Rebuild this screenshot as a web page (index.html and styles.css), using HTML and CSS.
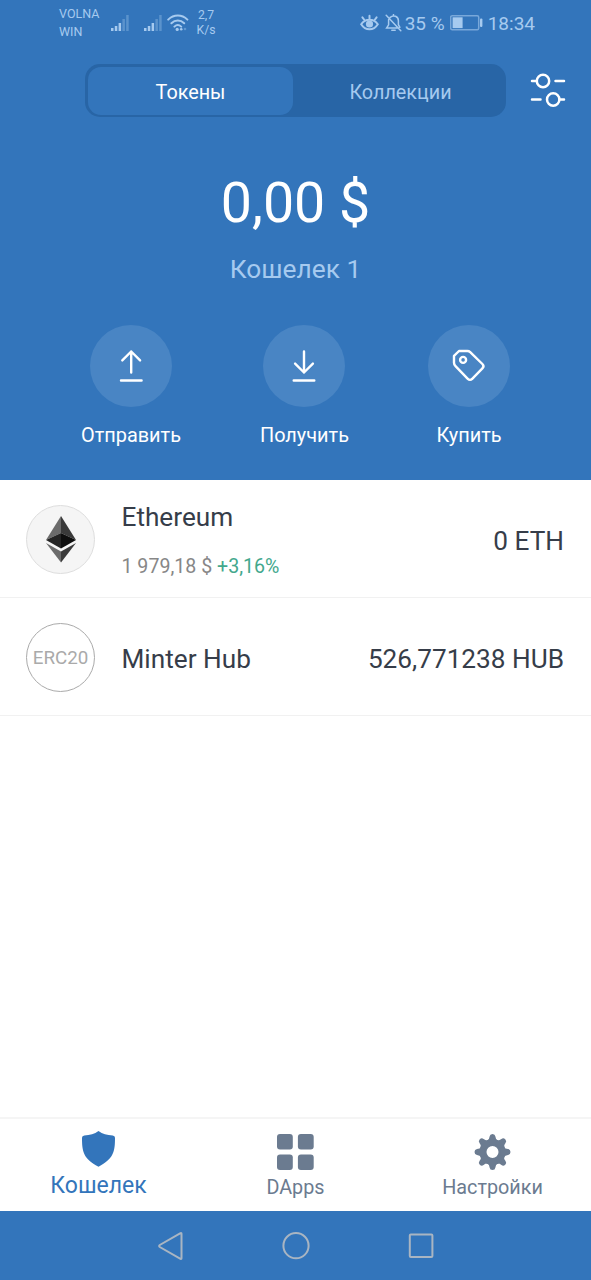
FILE: index.html
```html
<!DOCTYPE html>
<html lang="ru">
<head>
    <meta charset="UTF-8">
    <meta name="viewport" content="width=device-width, initial-scale=1.0">
    <title>Кошелек</title>
    <link rel="stylesheet" href="styles.css">
</head>
<body>

    <div class="top">
        <!-- Phone status bar -->
        <div class="status-bar">
            <div class="carrier">VOLNA<br>WIN</div>
            <svg class="signal signal-one" width="18" height="18" viewBox="0 0 18 18">
                <path d="M0 14h2.5v3H0zM3.8 12h2.5v5H3.8zM7.6 9h2.5v8H7.6z"/>
                <path opacity=".35" d="M11.4 5h2.5v12h-2.5zM15.2 1h2.5v16h-2.5z"/>
            </svg>
            <svg class="signal signal-two" width="18" height="18" viewBox="0 0 18 18">
                <path d="M0 14h2.5v3H0zM3.8 12h2.5v5H3.8zM7.6 9h2.5v8H7.6z"/>
                <path opacity=".35" d="M11.4 5h2.5v12h-2.5zM15.2 1h2.5v16h-2.5z"/>
            </svg>
            <svg class="wifi" width="22" height="18" viewBox="0 0 22 18">
                <path class="line" d="M1.2 5.6C6.8.2 14.8.2 20.4 5.6M4.4 9.2c3.7-3.5 9.1-3.5 12.8 0M7.4 12.6c2-1.9 4.8-1.9 6.8 0"/>
                <circle cx="10.2" cy="15.4" r="1.6"/>
                <circle cx="14.2" cy="15.2" r="1.3"/>
                <circle opacity=".4" cx="18" cy="15" r="1.3"/>
            </svg>
            <div class="speed">2,7<br>K/s</div>
            <div class="status-right">
                <svg width="19" height="18" viewBox="0 0 19 18">
                    <path class="line" d="M1.2 10.2c4.2-6 12.4-6 16.6 0-4.2 6.8-12.4 6.8-16.6 0zM9.5 5V1.8M4.4 6L2.4 3.4M14.6 6l2-2.6"/>
                    <circle cx="9.5" cy="10" r="3.6"/>
                </svg>
                <svg class="bell" width="17" height="18" viewBox="0 0 17 18">
                    <path class="thin" d="M3.6 5.5v5.3L1.6 14h12M5.2 3.4c3.2-3 8.2-1 8.2 3.3v4l1.5 2.6M6.8 16.3h3.4M8.5 2V.5M1.2 1.2l14.6 15.6"/>
                </svg>
                <span class="percent">35 %</span>
                <svg class="battery" width="33" height="18" viewBox="0 0 33 18">
                    <rect class="thin" x=".7" y="1.7" width="28" height="14" rx="1.5" opacity=".6"/>
                    <rect x="2.6" y="3.3" width="10" height="10.8"/>
                    <rect x="30" y="4.5" width="2.4" height="8.5" rx="1"/>
                </svg>
                <span class="clock">18:34</span>
            </div>
        </div>

        <!-- Tabs -->
        <div class="tab-row">
            <div class="tabs">
                <div class="tab active">Токены</div>
                <div class="tab">Коллекции</div>
            </div>
            <svg class="filter-icon" width="36" height="36" viewBox="0 0 36 36">
                <path d="M2 8h4M25.5 8H34M2 26.5h8.5M29.5 26.5H34"/>
                <circle cx="13" cy="8" r="6.2"/>
                <circle cx="23.2" cy="26.5" r="6.2"/>
            </svg>
        </div>

        <div class="balance">0,00 $</div>
        <div class="wallet-name">Кошелек 1</div>

        <div class="actions">
            <div class="action">
                <div class="action-circle">
                    <svg width="36" height="36" viewBox="0 0 36 36">
                        <path d="M18.2 24.5v-21M9.3 12.4l8.9-8.9 8.9 8.9M8 32.5h20.6"/>
                    </svg>
                </div>
                <div class="action-label">Отправить</div>
            </div>
            <div class="action">
                <div class="action-circle">
                    <svg width="36" height="36" viewBox="0 0 36 36">
                        <path d="M18 3.5v21M9.1 15.6l8.9 8.9 8.9-8.9M7.7 32.5h20.6"/>
                    </svg>
                </div>
                <div class="action-label">Получить</div>
            </div>
            <div class="action">
                <div class="action-circle">
                    <svg width="36" height="36" viewBox="0 0 36 36">
                        <path d="M8 3h8.4q1.600 0 2.800 1.100L31.400 16q2.200 2.200 0 4.400L21.200 30.800q-2.200 2.200-4.400 0L4.500 18.200Q3 16.800 3 14.800V7.800Z"/>
                        <circle cx="12.1" cy="11.9" r="3"/>
                    </svg>
                </div>
                <div class="action-label">Купить</div>
            </div>
        </div>
    </div>

    <!-- Token list -->
    <div class="tokens">
        <div class="token">
            <div class="token-icon eth">
                <svg width="30" height="48" viewBox="0 0 30 48">
                    <path fill="#6b6b6b" d="M15 1L0 25l15-7z"/>
                    <path fill="#3a3a3a" d="M15 1l15 24-15-7z"/>
                    <path fill="#242424" d="M15 18L0 25l15 8.6z"/>
                    <path fill="#0e0e0e" d="M15 18l15 7-15 8.6z"/>
                    <path fill="#6b6b6b" d="M0 28l15 8.6v11z"/>
                    <path fill="#3a3a3a" d="M30 28l-15 8.6v11z"/>
                </svg>
            </div>
            <div class="token-info">
                <div class="token-name">Ethereum</div>
                <div class="token-price">1 979,18 $ <span class="up">+3,16%</span></div>
            </div>
            <div class="token-amount">0 ETH</div>
        </div>
        <div class="token">
            <div class="token-icon erc">ERC20</div>
            <div class="token-info">
                <div class="token-name">Minter Hub</div>
            </div>
            <div class="token-amount">526,771238 HUB</div>
        </div>
    </div>

    <!-- App navigation -->
    <div class="bottom-nav">
        <div class="nav-item active">
            <svg width="38" height="38" viewBox="0 0 38 38">
                <path d="M18.5 1c4 3 8.5 4.3 14.2 4.4q2.3.2 2.3 2.4c0 14-1.4 21-16.5 29C3.4 28.8 2 21.8 2 7.8q0-2.2 2.300-2.400C10 5.300 14.500 4 18.500 1z"/>
            </svg>
            <div class="nav-label">Кошелек</div>
        </div>
        <div class="nav-item">
            <svg width="38" height="38" viewBox="0 0 38 38">
                <rect x="0" y="1" width="15.8" height="15.5" rx="3"/>
                <rect x="20.9" y="1" width="15.8" height="15.5" rx="3"/>
                <rect x="0" y="21.5" width="15.8" height="15.5" rx="3"/>
                <rect x="20.9" y="21.5" width="15.8" height="15.5" rx="3"/>
            </svg>
            <div class="nav-label">DApps</div>
        </div>
        <div class="nav-item">
            <svg class="gear" width="38" height="38" viewBox="-18.5 -19 38 38">
                <circle r="9.5"/>
                <path id="tooth" d="M-5-11.500Q-3.200-12.500-2.900-15.500Q-2.600-18 0-18Q2.600-18 2.900-15.500Q3.200-12.500 5-11.500L4-8H-4Z"/>
                <use href="#tooth" transform="rotate(45)"/>
                <use href="#tooth" transform="rotate(90)"/>
                <use href="#tooth" transform="rotate(135)"/>
                <use href="#tooth" transform="rotate(180)"/>
                <use href="#tooth" transform="rotate(225)"/>
                <use href="#tooth" transform="rotate(270)"/>
                <use href="#tooth" transform="rotate(315)"/>
            </svg>
            <div class="nav-label">Настройки</div>
        </div>
    </div>

    <!-- Android buttons -->
    <div class="system-nav">
        <svg width="28" height="30" viewBox="0 0 28 30">
            <path d="M24.5 2.700v24.600q0 1-1 .5L2.800 16q-1.300-1 0-2L23.500 2.200q1-.5 1 .5z"/>
        </svg>
        <svg width="28" height="30" viewBox="0 0 28 30">
            <circle cx="14" cy="14.7" r="12.6"/>
        </svg>
        <svg width="28" height="30" viewBox="0 0 28 30">
            <rect x="2.8" y="3.5" width="22.6" height="22.6" rx="1"/>
        </svg>
    </div>

</body>
</html>
```
FILE: styles.css
```css
:root {
    --blue: #3375bb;
    --blue-dark: #2865a6;
    --blue-light: #a6caef;
    --text-dark: #363d49;
    --text-gray: #878787;
    --nav-gray: #6b7b90;
    --green: #43a88d;
}

* {
    margin: 0;
    padding: 0;
    box-sizing: border-box;
}

body {
    font-family: Roboto, sans-serif;
    display: flex;
    flex-direction: column;
    height: 1280px;
    background-color: #ffffff;
    color: var(--text-dark);
    white-space: nowrap;
    overflow: hidden;
}

svg {
    display: block;
    flex-shrink: 0;
}

.top {
    height: 480px;
    background-color: var(--blue);
    color: #ffffff;
}

/* Status bar */
.status-bar {
    display: flex;
    align-items: center;
    height: 46px;
    padding: 0 56px 0 59px;
    color: var(--blue-light);
}

.status-bar svg {
    fill: var(--blue-light);
}

.status-bar .line,
.status-bar .thin {
    fill: none;
    stroke: var(--blue-light);
    stroke-width: 2;
    stroke-linecap: round;
}

.status-bar .thin {
    stroke-width: 1.5;
}

.carrier {
    width: 52px;
    font-size: 12.5px;
    line-height: 18px;
}

.signal-two {
    margin-left: 15px;
}

.wifi {
    margin-left: 5px;
}

.speed {
    width: 20px;
    margin-left: 7px;
    font-size: 12.2px;
    line-height: 15px;
    text-align: center;
}

.status-right {
    display: flex;
    align-items: center;
    margin-left: auto;
    font-size: 19px;
}

.bell {
    margin-left: 6px;
}

.percent {
    width: 41px;
    margin-left: 3px;
}

.battery {
    margin-left: 4px;
}

.clock {
    margin-left: 5px;
}

/* Tabs */
.tab-row {
    display: flex;
    align-items: center;
    height: 53px;
    margin-top: 18px;
    padding-left: 85px;
}

.tabs {
    display: flex;
    width: 421px;
    height: 53px;
    padding: 3px;
    border-radius: 15px;
    background-color: var(--blue-dark);
}

.tab {
    flex: 1;
    height: 48px;
    padding-left: 5px;
    border-radius: 13px;
    font-size: 19.8px;
    line-height: 51px;
    text-align: center;
    color: var(--blue-light);
}

.tab.active {
    flex: none;
    width: 205px;
    padding-left: 0;
    background-color: var(--blue);
    color: #ffffff;
}

.filter-icon {
    margin-left: 24px;
    fill: none;
    stroke: #ffffff;
    stroke-width: 2.5;
    stroke-linecap: round;
}

/* Balance */
.balance {
    margin-top: 57px;
    font-size: 55.5px;
    line-height: 60px;
    text-align: center;
}

.wallet-name {
    margin-top: 20px;
    font-size: 26.3px;
    line-height: 30px;
    text-align: center;
    color: var(--blue-light);
}

.actions {
    display: flex;
    justify-content: center;
    gap: 79px;
    margin-top: 41px;
}

.action {
    display: flex;
    flex-direction: column;
    align-items: center;
}

.action-circle {
    display: flex;
    justify-content: center;
    align-items: center;
    width: 82px;
    height: 82px;
    border-radius: 50%;
    background-color: #4985c4;
}

.action-circle svg {
    fill: none;
    stroke: #ffffff;
    stroke-width: 2.4;
    stroke-linecap: round;
    stroke-linejoin: round;
}

.action-label {
    margin-top: 17px;
    font-size: 19.9px;
    line-height: 24px;
}

/* Token list */
.tokens {
    flex: 1;
}

.token {
    display: flex;
    align-items: center;
    height: 118px;
    padding: 0 27px 0 26px;
    border-bottom: 1px solid #f1f1f1;
}

.token-icon {
    display: flex;
    justify-content: center;
    align-items: center;
    width: 69px;
    height: 69px;
    margin-top: 1px;
    border-radius: 50%;
}

.token-icon.eth {
    background-color: #f5f5f5;
    border: 1px solid #dedede;
}

.token-icon.erc {
    padding-top: 2px;
    border: 1px solid #aaaaaa;
    font-size: 18.8px;
    color: #aaaaaa;
}

.token-info {
    flex: 1;
    padding-left: 26.5px;
}

.token-name {
    padding-top: 4px;
    font-size: 26.2px;
    line-height: 30px;
}

.token-price {
    margin-top: 22px;
    padding-top: 1px;
    font-size: 19.6px;
    line-height: 24px;
    color: var(--text-gray);
}

.up {
    color: var(--green);
}

.token-amount {
    padding-top: 4px;
    font-size: 26.2px;
    line-height: 30px;
}

/* App navigation */
.bottom-nav {
    display: flex;
    height: 94px;
    border-top: 2px solid #f5f5f5;
}

.nav-item {
    display: flex;
    flex: 1;
    flex-direction: column;
    align-items: center;
    padding-top: 14px;
    color: var(--nav-gray);
}

.nav-item svg {
    fill: currentColor;
}

.nav-item .gear circle {
    fill: none;
    stroke: currentColor;
    stroke-width: 7;
}

.nav-label {
    margin-top: 5px;
    font-size: 19.8px;
    line-height: 24px;
}

.nav-item.active {
    padding-top: 11px;
    color: var(--blue);
}

.nav-item.active .nav-label {
    font-size: 23px;
    margin-top: 6px;
}

/* Android buttons */
.system-nav {
    display: flex;
    justify-content: center;
    align-items: center;
    gap: 97px;
    height: 69px;
    background-color: var(--blue);
}

.system-nav svg {
    fill: none;
    stroke: #a9b5c2;
    stroke-width: 2;
}
```
